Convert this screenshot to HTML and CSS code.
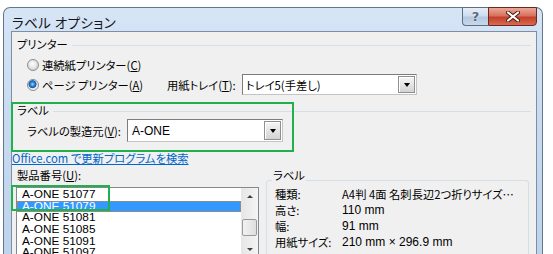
FILE: index.html
```html
<!DOCTYPE html>
<html lang="ja">
<head>
<meta charset="utf-8">
<link rel="stylesheet" href="styles.css">
</head>
<body>
<div class="win">
  <div class="titlebar">
    <span class="title">ラベル オプション</span>
    <div class="capbtns">
      <div class="cbtn help"><span>?</span></div>
      <div class="cbtn close">
        <svg width="14" height="11" viewBox="0 0 14 11"><path d="M2 1.5 L12 9.5 M12 1.5 L2 9.5" stroke="#4a1810" stroke-width="4" stroke-linecap="round"/><path d="M2 1.5 L12 9.5 M12 1.5 L2 9.5" stroke="#fff" stroke-width="2.2" stroke-linecap="round"/></svg>
      </div>
    </div>
  </div>
  <div class="client">
    <div class="ghead"><span>プリンター</span><i class="rule"></i></div>
    <div class="rrow r1"><span class="radio"></span><span>連続紙プリンター(<u>C</u>)</span></div>
    <div class="rrow r2">
      <span class="radio on"></span><span class="pagelbl">ページ プリンター(<u>A</u>)</span>
      <span class="traylbl">用紙トレイ(<u>T</u>):</span>
      <div class="combo tray"><span class="val">トレイ5(手差し)</span><span class="drop"><i></i></span></div>
    </div>
    <div class="ghead lhead"><span>ラベル</span><i class="rule"></i></div>
    <div class="makerrow">
      <span class="makerlbl">ラベルの製造元(<u>V</u>):</span>
      <div class="combo maker"><span class="val lat">A-ONE</span><span class="drop"><i></i></span></div>
    </div>
    <a class="link">Office.com で更新プログラムを検索</a>
    <div class="bottom">
      <div class="leftcol">
        <div class="plabel">製品番号(<u>U</u>):</div>
        <div class="list">
          <div class="items">
            <div class="item">A-ONE 51077</div>
            <div class="item sel">A-ONE 51079</div>
            <div class="item">A-ONE 51081</div>
            <div class="item">A-ONE 51085</div>
            <div class="item">A-ONE 51091</div>
            <div class="item">A-ONE 51097</div>
          </div>
          <div class="sbar">
            <span class="arr up"></span>
            <span class="thumb"></span>
            <span class="arr down"></span>
          </div>
        </div>
      </div>
      <div class="info">
        <span class="legend">ラベル</span>
        <div class="infobox">
          <span>種類:</span><span>A4判 4面 名刺長辺2つ折りサイズ…</span>
          <span>高さ:</span><span class="lat">110 mm</span>
          <span>幅:</span><span class="lat">91 mm</span>
          <span>用紙サイズ:</span><span class="lat">210 mm × 296.9 mm</span>
        </div>
      </div>
    </div>
  </div>
</div>
<div class="hl hl1"></div>
<div class="hl hl2"></div>
</body>
</html>
```
FILE: styles.css
```css
* { box-sizing: border-box; }
html, body { margin: 0; padding: 0; }
body {
  width: 553px; height: 254px; overflow: hidden; background: #fff;
  font-family: "Noto Sans CJK JP", "Liberation Sans", sans-serif;
  font-size: 11.3px; color: #000;
  font-feature-settings: "palt";
  position: relative;
}
.lat { font-family: "Liberation Sans", "Noto Sans CJK JP", sans-serif; font-size: 12px; }
u { text-decoration: underline; text-underline-offset: 1px; }
.win {
  margin: 7px 0 0 3px; width: 540px; height: 260px;
  border: 1px solid #65758a; border-bottom: 0;
  border-radius: 7px 7px 0 0;
  background: linear-gradient(180deg, #d6e5f6 0%, #c8dbf0 40%, #bcd3ec 100%);
  display: flex; flex-direction: column;
}
.titlebar { height: 26px; display: flex; align-items: center; padding-left: 8px; }
.title { font-size: 13.5px; line-height: 16px; color: #151515; margin-top: 4px; white-space: nowrap; letter-spacing: 0.4px; }
.capbtns { margin-left: auto; align-self: flex-start; margin-top: -1px; margin-right: 5px; display: flex; }
.cbtn { height: 19px; border: 1px solid #5f6f82; display: flex; align-items: center; justify-content: center; }
.help {
  width: 26px; border-right: 0; border-radius: 0 0 0 4px;
  background: linear-gradient(180deg, #e6eef8 0%, #cddcee 45%, #b4c8e0 55%, #c9d9ec 100%);
}
.help span { font-family: "DejaVu Sans", sans-serif; font-size: 13px; font-weight: bold; color: #5c6a7a; line-height: 13px; text-shadow: 0 0 2px #fff; }
.close {
  width: 49px; border-color: #6b2a1e; border-radius: 0 0 4px 0;
  background: linear-gradient(180deg, #e9a898 0%, #d8725e 45%, #c4402a 55%, #d66c50 100%);
}
.client {
  margin: 0 5px 0 7px; flex: 1;
  border: 1px solid #7f8ea2; border-bottom: 0;
  background: #f0f0f0;
}
.ghead { display: flex; align-items: center; padding-left: 5px; line-height: 14px; height: 14px; white-space: nowrap; }
.ghead:first-child { margin-top: 5px; }
.rule { flex: 1; height: 1px; background: #d5dfe5; margin: 2px 5px 0 4px; }
.rrow { display: flex; align-items: center; padding-left: 15px; line-height: 14px; white-space: nowrap; }
.r1 { margin-top: 7px; height: 14px; }
.r2 { margin-top: 2px; height: 21px; }
.radio {
  width: 12px; height: 12px; border-radius: 50%; border: 1px solid #8a8c8e; margin-right: 3px; flex: none;
  background: radial-gradient(circle at 45% 40%, #ffffff 0, #f2f2f2 2px, #d2d4d6 6px);
}
.radio.on {
  background: radial-gradient(circle at 45% 42%, #a6dcff 0, #3a96e4 1.6px, #0e5aa8 3.6px, #e4e6e8 4.4px, #f4f4f4 6px);
}
.pagelbl { width: 125px; }
.traylbl { width: 75px; }
.combo {
  display: flex; align-items: center; background: #fff;
  border: 1px solid; border-color: #7c7c7c #c4c4c4 #c4c4c4 #7c7c7c;
}
.combo .val { flex: 1; line-height: 14px; white-space: nowrap; }
.tray { width: 175px; height: 21px; }
.tray .val { padding-left: 3px; }
.drop {
  width: 17px; height: 17px; margin-right: 1px; flex: none;
  border: 1px solid #8f8f8f; box-shadow: inset 1px 1px 0 #fff;
  background: linear-gradient(180deg, #f6f6f6, #d3d3d3);
  display: flex; align-items: center; justify-content: center;
}
.drop i { width: 0; height: 0; border-left: 3.5px solid transparent; border-right: 3.5px solid transparent; border-top: 4px solid #000; margin-top: 1px; }
.lhead { margin-top: 8px; }
.makerrow { display: flex; align-items: center; margin-top: 2px; padding-left: 15px; height: 23px; }
.makerlbl { width: 100px; line-height: 14px; white-space: nowrap; }
.maker { width: 156px; height: 23px; }
.maker .val { padding-left: 4px; }
.maker .drop { height: 19px; }
.link { display: block; margin-top: 9px; line-height: 14px; color: #0066cc; text-decoration: underline; text-underline-offset: 1px; width: max-content; white-space: nowrap; }
.bottom { display: flex; margin-top: 3px; }
.leftcol { width: 247px; padding-left: 4px; flex: none; }
.plabel { line-height: 14px; padding-left: 1px; }
.list {
  margin-top: 5px; width: 243px; height: 80px; border: 1px solid #828790; border-bottom: 0;
  background: #fff; display: flex;
}
.items { flex: 1; font-family: "Liberation Sans", sans-serif; padding-top: 1px; }
.item { line-height: 11.7px; height: 11.7px; padding-left: 5px; font-size: 11.8px; }
.item.sel { background: #3399ff; color: #fff; outline: 1px dotted #d9822b; outline-offset: -1px; }
.sbar {
  width: 17px; flex: none; background: linear-gradient(90deg, #e6e6e6, #f4f4f4);
  display: flex; flex-direction: column; align-items: center;
}
.arr { width: 0; height: 0; border-left: 3px solid transparent; border-right: 3px solid transparent; }
.arr.up { border-bottom: 3px solid #404040; margin-top: 7px; }
.thumb {
  margin-top: 21px; width: 15px; height: 17px; border: 1px solid #9a9a9a; border-radius: 2px;
  background: linear-gradient(90deg, #f2f2f2, #dedede);
}
.arr.down { border-top: 3px solid #404040; margin-top: 12px; }
.info { margin-left: 7px; width: 263px; margin-top: -1px; }
.legend { position: relative; z-index: 1; display: inline-block; margin-left: 6px; padding: 0 1px; line-height: 14px; background: #f0f0f0; }
.infobox {
  margin-top: -3px; height: 80px; border: 1px solid #d5dfe5; border-bottom: 0; border-radius: 3px 3px 0 0;
  padding: 5px 0 0 8px;
  display: grid; grid-template-columns: 67px auto; grid-auto-rows: 16px; align-items: center;
  line-height: 14px; white-space: nowrap;
}
.hl { position: absolute; border: 2px solid #21b04b; }
.hl1 { left: 11px; top: 102px; width: 283px; height: 50px; }
.hl2 { left: 11px; top: 185px; width: 99px; height: 26px; }
```
